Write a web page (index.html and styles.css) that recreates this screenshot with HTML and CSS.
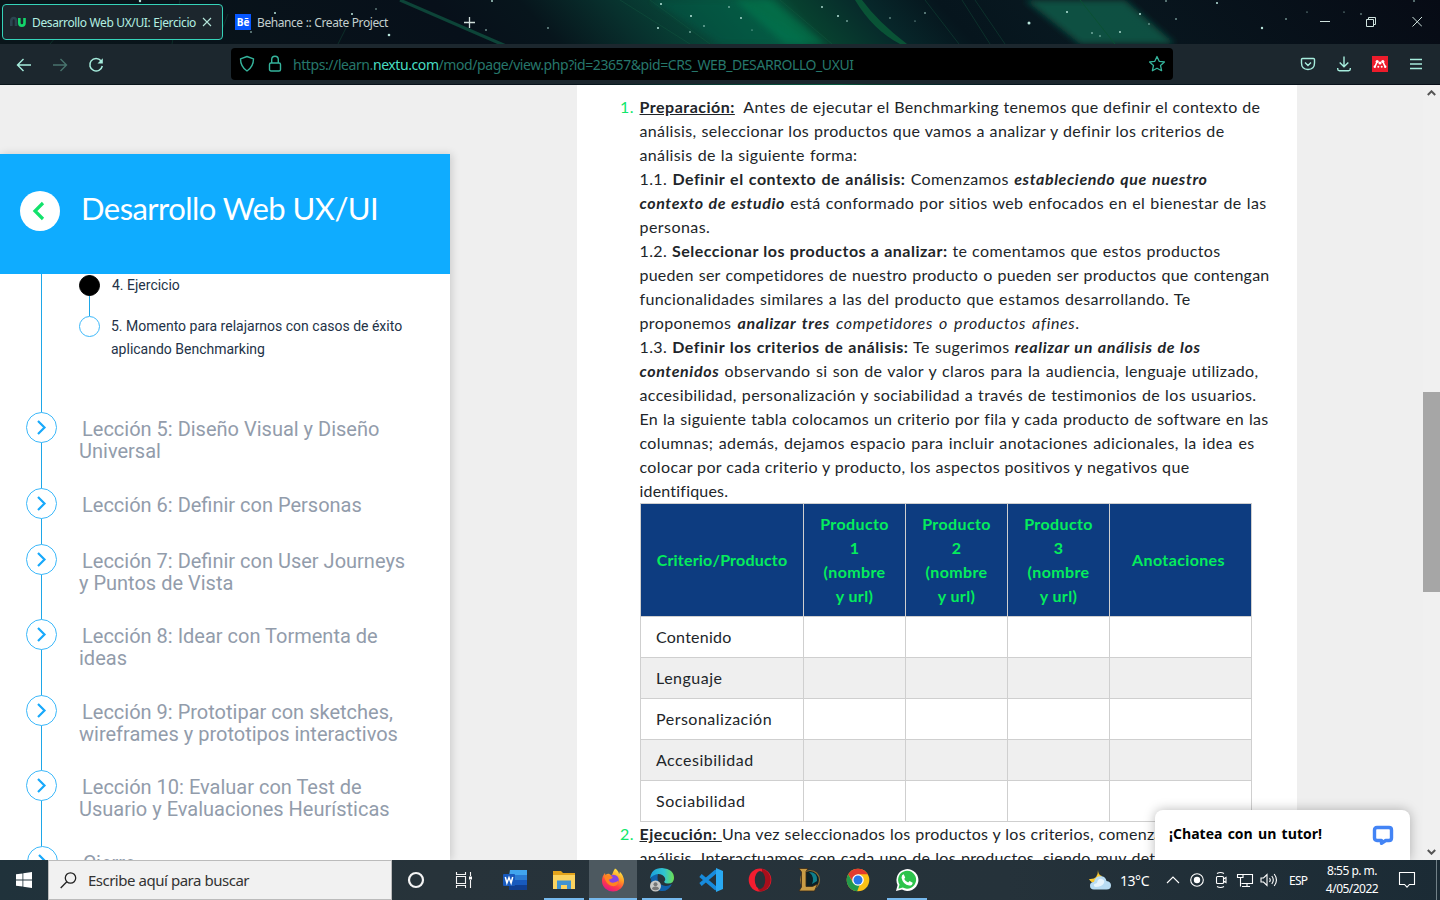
FILE: index.html
```html
<!DOCTYPE html>
<html lang="es">
<head>
<meta charset="utf-8">
<title>Desarrollo Web UX/UI: Ejercicio</title>
<link rel="stylesheet" href="styles.css">
</head>
<body>
<div class="screen">
  <header class="tabs">
    <svg class="sky" width="1440" height="85" viewBox="0 0 1440 85">
      <defs>
        <linearGradient id="neb" x1="0" x2="1440" y1="0" y2="0" gradientUnits="userSpaceOnUse">
          <stop offset="0" stop-color="#09151a"/><stop offset=".3" stop-color="#07101a"/><stop offset=".36" stop-color="#07151c"/><stop offset=".42" stop-color="#08302d"/><stop offset=".48" stop-color="#074a3a"/><stop offset=".53" stop-color="#065a40"/><stop offset=".55" stop-color="#07402f"/><stop offset=".6" stop-color="#07272a"/><stop offset=".65" stop-color="#06151d"/><stop offset=".73" stop-color="#081820"/><stop offset="1" stop-color="#070b15"/>
        </linearGradient>
        <filter id="soft" x="-10%" y="-20%" width="120%" height="140%"><feGaussianBlur stdDeviation="3"/></filter>
      </defs>
      <rect width="1440" height="85" fill="#070e17"/>
      <g transform="skewX(42)"><rect x="-100" width="1640" height="85" fill="url(#neb)"/></g>
      <g filter="url(#soft)">
        <path d="M650 0h90l70 44h-90z" fill="#06604a" opacity=".4"/>
        <path d="M735 0h38l52 44h-40z" fill="#078050" opacity=".5"/>
        <path d="M1025 0h100l50 44h-95z" fill="#0d5948" opacity=".85"/>
      </g>
      <path d="M855 0q18 30 45 44h7Q878 22 862 0z" fill="#0b6a3c" opacity=".65"/>
      <path d="M400 0l106 46" stroke="#0d4438" stroke-width="3" fill="none"/>
      <path d="M1080 0l35 44" stroke="#0b5134" fill="none"/>
      <path d="M780 0l52 44M962 0l28 44M975 0l30 44M228 14l-10 26M180 0l-8 44M70 20l-20 24M350 20l-12 24M620 0l70 44M650 0l60 44M925 0l34 44" stroke="#176046" stroke-width=".7" fill="none" opacity=".5"/>
      <g fill="#b9e6dc">
        <circle cx="140" cy="1" r="1.2"/><circle cx="275" cy="13" r="1"/><circle cx="352" cy="14" r="1"/><circle cx="389" cy="35" r="1.3"/><circle cx="376" cy="9" r=".7"/><circle cx="251" cy="32" r=".8"/><circle cx="492" cy="1" r=".9"/><circle cx="486" cy="30" r=".8"/><circle cx="548" cy="28" r=".8"/><circle cx="661" cy="4" r="1"/><circle cx="691" cy="16" r="1"/><circle cx="658" cy="28" r="1"/><circle cx="690" cy="32" r=".8"/><circle cx="704" cy="26" r=".8"/><circle cx="741" cy="18" r=".9"/><circle cx="729" cy="7" r=".8"/><circle cx="752" cy="30" r=".6"/><circle cx="822" cy="7" r=".9"/><circle cx="838" cy="16" r="1"/><circle cx="847" cy="21" r=".8"/><circle cx="890" cy="18" r=".7"/><circle cx="925" cy="13" r=".8"/><circle cx="915" cy="21" r=".6"/><circle cx="1029" cy="23" r="1.5"/><circle cx="1067" cy="12" r="1"/><circle cx="1140" cy="14" r="1"/><circle cx="1120" cy="32" r=".9"/><circle cx="1092" cy="33" r=".8"/><circle cx="1100" cy="36" r=".7"/><circle cx="1149" cy="24" r=".7"/><circle cx="1166" cy="1" r=".8"/><circle cx="1176" cy="19" r=".8"/><circle cx="1217" cy="3" r="1"/><circle cx="1262" cy="28" r="1.2"/><circle cx="1286" cy="19" r=".8"/><circle cx="1307" cy="12" r=".6"/><circle cx="1344" cy="12" r=".6"/><circle cx="1361" cy="14" r=".7"/><circle cx="1414" cy="1" r=".8"/>
      </g>
    </svg>
    <div class="tab tab-active">
      <svg width="16" height="16" viewBox="0 0 16 16" fill="none" stroke-width="2.6"><path d="M1.3 12V7q0-3 2.4-3T6 7v5" stroke="#2c4450"/><path d="M9.3 4v5q0 2.600 2.600 2.600T14.500 9V4" stroke="#14d66b"/></svg>
      <span class="fit tab-title">Desarrollo Web UX/UI: Ejercicio</span>
      <svg width="10" height="10" viewBox="0 0 10 10" stroke="#b4e6da" stroke-width="1.100"><path d="M1 1l8 8M9 1L1 9"/></svg>
    </div>
    <div class="tab tab-other">
      <span class="be">Bē</span>
      <span class="fit tab-title2">Behance :: Create Project</span>
    </div>
    <svg class="plus" width="13" height="13" viewBox="0 0 13 13" stroke="#d0ddda" stroke-width="1.300"><path d="M6.500 1v11M1 6.500h11"/></svg>
    <svg class="wins" width="102" height="12" viewBox="0 0 102 12" fill="none" stroke="#cfe3de"><path d="M0 5.500h10M46.500 3.500h7v7h-7zM48.500 3.500v-2h7v7h-2M92.500 1l9.500 9.500M102 1l-9.500 9.500"/></svg>
  </header>

  <nav class="toolbar">
    <div class="nav-buttons">
      <svg width="16" height="16" viewBox="0 0 16 16" fill="none" stroke="#a6eddd" stroke-width="1.400"><path d="M15 8H1.500M7.500 2l-6 6 6 6"/></svg>
      <svg width="16" height="16" viewBox="0 0 16 16" fill="none" stroke="#48736d" stroke-width="1.400"><path d="M1 8h13.500M8.500 2l6 6-6 6"/></svg>
      <svg width="16" height="16" viewBox="0 0 16 16" fill="none" stroke="#a6eddd" stroke-width="1.500"><path d="M13 3.700A6.300 6.300 0 1 0 14.300 9"/><path d="M14.800 1.200v5.300H9.500z" fill="#a6eddd" stroke="none"/></svg>
    </div>
    <div class="urlbar">
      <svg width="16" height="18" viewBox="0 0 16 18" fill="none" stroke="#35b49c" stroke-width="1.400"><path d="M8 1.500l6.500 2.300c0 5.500-1.500 9-6.500 12.200C3 12.800 1.500 9.300 1.500 3.800z" stroke-linejoin="round"/></svg>
      <svg width="14" height="18" viewBox="0 0 14 18" fill="none" stroke="#35b49c" stroke-width="1.400"><rect x="1.500" y="8" width="11" height="8" rx="1.500"/><path d="M3.700 8V4.500a3.300 3.300 0 0 1 6.600 0V8"/></svg>
      <span class="url">https://learn.<b>nextu.com</b>/mod/page/view.php?id=23657&amp;pid=CRS_WEB_DESARROLLO_UXUI</span>
      <svg class="star" width="18" height="18" viewBox="0 0 18 18" fill="none" stroke="#35b49c" stroke-width="1.300" stroke-linejoin="round"><path d="M9 1.500l2.200 4.800 5.200.6-3.900 3.500 1.100 5.300L9 13.200l-4.600 2.500 1.100-5.300L1.600 6.900l5.200-.6z"/></svg>
    </div>
    <div class="tools">
      <svg width="16" height="16" viewBox="0 0 16 16" fill="none" stroke="#a6eddd" stroke-width="1.400"><path d="M2.500 2.500h11q1 0 1 1V7q0 6.500-6.500 6.500T1.500 7V3.500q0-1 1-1zM5 6.500l3 3 3-3"/></svg>
      <svg width="16" height="16" viewBox="0 0 16 16" fill="none" stroke="#a6eddd" stroke-width="1.400"><path d="M8 .5v10M3.700 6.500L8 10.800l4.300-4.300M1.700 12v1q0 1.700 1.700 1.700h9.200q1.700 0 1.700-1.700v-1"/></svg>
      <svg width="16" height="16" viewBox="0 0 16 16"><path fill="#ec1c2b" d="M0 0h16v16H0z"/><g fill="#fff"><circle cx="5.200" cy="5.500" r="1.600"/><circle cx="10.800" cy="5.500" r="1.600"/><circle cx="2.800" cy="10.700" r="1.200"/><circle cx="13.200" cy="10.700" r="1.200"/><circle cx="8" cy="7" r="1.600"/><circle cx="6.300" cy="10.800" r="1"/><circle cx="9.700" cy="10.800" r="1"/></g><path d="M3 10.500l2-4.500M13 10.500L11 6" stroke="#fff" stroke-width="1.600"/></svg>
      <svg width="16" height="16" viewBox="0 0 16 16" stroke="#a6eddd" stroke-width="1.300"><path d="M2 3.500h12M2 8h12M2 12.500h12"/></svg>
    </div>
  </nav>

  <main class="page">
    <aside class="sidebar">
      <div class="course">
        <span class="back"><svg width="14" height="20" viewBox="0 0 14 20" fill="none" stroke="#12e26b" stroke-width="3.200"><path d="M11 2L3 10l8 8"/></svg></span>
        <h1>Desarrollo Web UX/UI</h1>
      </div>
      <div class="outline">
        <ul class="steps">
          <li class="step step-now"><i class="dot dot-on"></i><span class="ej">4. Ejercicio</span></li>
          <li class="step"><i class="dot"></i><span>5. Momento para relajarnos con casos de éxito<br>aplicando Benchmarking</span></li>
        </ul>
        <ul class="lessons">
          <li class="tall"><i class="go"><svg width="11" height="17" viewBox="0 0 11 17"><path d="M2 2l6.500 6.500L2 15"/></svg></i><span>Lección 5: Diseño Visual y Diseño<br>Universal</span></li>
          <li class="short"><i class="go"><svg width="11" height="17" viewBox="0 0 11 17"><path d="M2 2l6.500 6.500L2 15"/></svg></i><span>Lección 6: Definir con Personas</span></li>
          <li><i class="go"><svg width="11" height="17" viewBox="0 0 11 17"><path d="M2 2l6.500 6.500L2 15"/></svg></i><span>Lección 7: Definir con User Journeys<br>y Puntos de Vista</span></li>
          <li class="tall"><i class="go"><svg width="11" height="17" viewBox="0 0 11 17"><path d="M2 2l6.500 6.500L2 15"/></svg></i><span>Lección 8: Idear con Tormenta de<br>ideas</span></li>
          <li><i class="go"><svg width="11" height="17" viewBox="0 0 11 17"><path d="M2 2l6.500 6.500L2 15"/></svg></i><span>Lección 9: Prototipar con sketches,<br>wireframes y prototipos interactivos</span></li>
          <li class="tall"><i class="go"><svg width="11" height="17" viewBox="0 0 11 17"><path d="M2 2l6.500 6.500L2 15"/></svg></i><span>Lección 10: Evaluar con Test de<br>Usuario y Evaluaciones Heurísticas</span></li>
          <li class="last"><i class="go"><svg width="11" height="17" viewBox="0 0 11 17"><path d="M2 2l6.500 6.500L2 15"/></svg></i><span>Cierre</span></li>
        </ul>
      </div>
    </aside>

    <article class="article">
      <section class="item">
        <span class="num">1.</span>
        <div class="body">
          <p class="fit w1"><b><u>Preparación:</u></b>&nbsp; Antes de ejecutar el Benchmarking tenemos que definir el contexto de</p>
          <p class="fit w2">análisis, seleccionar los productos que vamos a analizar y definir los criterios de</p>
          <p class="fit w3">análisis de la siguiente forma:</p>
          <p class="fit w4">1.1. <b>Definir el contexto de análisis:</b> Comenzamos <b><em>estableciendo que nuestro</em></b></p>
          <p class="fit w5"><b><em>contexto de estudio</em></b> está conformado por sitios web enfocados en el bienestar de las</p>
          <p class="fit w6">personas.</p>
          <p class="fit w7">1.2. <b>Seleccionar los productos a analizar:</b> te comentamos que estos productos</p>
          <p class="fit w8">pueden ser competidores de nuestro producto o pueden ser productos que contengan</p>
          <p class="fit w9">funcionalidades similares a las del producto que estamos desarrollando. Te</p>
          <p class="fit w10">proponemos <em><b>analizar tres</b> competidores o productos afines</em>.</p>
          <p class="fit w11">1.3. <b>Definir los criterios de análisis:</b> Te sugerimos <b><em>realizar un análisis de los</em></b></p>
          <p class="fit w12"><b><em>contenidos</em></b> observando si son de valor y claros para la audiencia, lenguaje utilizado,</p>
          <p class="fit w13">accesibilidad, personalización y sociabilidad a través de testimonios de los usuarios.</p>
          <p class="fit w14">En la siguiente tabla colocamos un criterio por fila y cada producto de software en las</p>
          <p class="fit w15">columnas; además, dejamos espacio para incluir anotaciones adicionales, la idea es</p>
          <p class="fit w16">colocar por cada criterio y producto, los aspectos positivos y negativos que</p>
          <p class="fit w17">identifiques.</p>
          <table class="criteria">
            <colgroup><col class="c1"><col class="c2"><col class="c2"><col class="c2"><col class="c3"></colgroup>
            <thead><tr><th class="first">Criterio/Producto</th><th>Producto<br>1<br>(nombre<br>y url)</th><th>Producto<br>2<br>(nombre<br>y url)</th><th>Producto<br>3<br>(nombre<br>y url)</th><th class="notes">Anotaciones</th></tr></thead>
            <tbody>
              <tr><td>Contenido</td><td></td><td></td><td></td><td></td></tr>
              <tr><td class="loose">Lenguaje</td><td></td><td></td><td></td><td></td></tr>
              <tr><td class="loose">Personalización</td><td></td><td></td><td></td><td></td></tr>
              <tr><td class="loose">Accesibilidad</td><td></td><td></td><td></td><td></td></tr>
              <tr><td class="loose">Sociabilidad</td><td></td><td></td><td></td><td></td></tr>
            </tbody>
          </table>
        </div>
      </section>
      <section class="item">
        <span class="num">2.</span>
        <div class="body">
          <p class="fit w18"><b><u>Ejecución: </u></b>Una vez seleccionados los productos y los criterios, comenzamos</p>
          <p class="fit w19">análisis. Interactuamos con cada uno de los productos, siendo muy detallados</p>
        </div>
      </section>
    </article>

    <div class="scrollbar">
      <svg width="9" height="6" viewBox="0 0 9 6"><path d="M.8 5l3.700-3.700L8.200 5"/></svg>
      <i class="thumb"></i>
      <svg width="9" height="6" viewBox="0 0 9 6"><path d="M.8 1l3.700 3.700L8.200 1"/></svg>
    </div>

    <div class="chat">
      <span class="fit">¡Chatea con un tutor!</span>
      <svg width="22" height="22" viewBox="0 0 22 22" fill="none" stroke="#4384f5" stroke-width="3.400" stroke-linejoin="round"><path d="M5 2.500h12q2.500 0 2.500 2.500v8q0 2.500-2.500 2.500h-3.300L9.500 18.300v-2.800H5Q2.500 15.500 2.500 13V5Q2.500 2.500 5 2.500z"/></svg>
    </div>
  </main>

  <footer class="taskbar">
    <span class="start"><svg width="16" height="16" viewBox="0 0 16 16" fill="#fff"><path d="M0 2.300l6.500-.9v6.200H0zM7.300 1.300L16 0v7.600H7.300zM0 8.400h6.500v6.200L0 13.700zM7.300 8.400H16V16l-8.700-1.200z"/></svg></span>
    <div class="search">
      <svg width="17" height="17" viewBox="0 0 17 17" fill="none" stroke="#222" stroke-width="1.300"><circle cx="10.500" cy="6" r="5.200"/><path d="M6.800 9.700L.7 16"/></svg>
      <span class="fit">Escribe aquí para buscar</span>
    </div>
    <span class="cell48"><svg width="18" height="18" viewBox="0 0 18 18" fill="none" stroke="#f4f4f4" stroke-width="2.200"><circle cx="9" cy="9" r="7"/></svg></span>
    <span class="cell48"><svg width="18" height="16" viewBox="0 0 18 16" fill="none" stroke="#f4f4f4" stroke-width="1.100"><path d="M1.500 0v2.500h9V0M1.500 16v-2.500h9V16M1.500 4.500h9v7h-9zM15.500 0v4M15.500 8v8"/><path d="M14 4.500h3v3h-3z" fill="#fff" stroke="none"/></svg></span>
    <div class="apps">
      <span class="app"><svg width="24" height="24" viewBox="0 0 24 24"><path fill="#41a5ee" d="M7 2h17v6H6z"/><path fill="#2b7cd3" d="M6 7h18v5H6z"/><path fill="#185abd" d="M6 12h18v5H6z"/><path fill="#103f91" d="M6 17h18v5H6z"/><rect y="6" width="12" height="12" rx="1" fill="#185abd"/><path d="M2.300 9l1.600 6L6 9.500 8.100 15 9.700 9" fill="none" stroke="#fff" stroke-width="1.500"/></svg></span>
      <span class="app open"><svg width="22" height="20" viewBox="0 0 22 20"><path fill="#e3a31b" d="M0 1h8l2 2h12v4H0z"/><path fill="#fbd35f" d="M0 5h22v14H0z"/><path fill="#3f93d3" d="M4 10.500h14V19h-4v-4H8v4H4z"/></svg></span>
      <span class="app active"><svg width="24" height="24" viewBox="0 0 24 24"><defs><linearGradient id="fx" x1=".8" y1="0" x2=".3" y2="1"><stop offset="0" stop-color="#fff44f"/><stop offset=".4" stop-color="#ff9a22"/><stop offset=".7" stop-color="#ff3d48"/><stop offset="1" stop-color="#e31587"/></linearGradient></defs><path fill="url(#fx)" d="M14 .5q3.500 2 4 5.500 1-1 .7-2.500Q23 8 23 13a11 10.500 0 0 1-22 0q0-5 3-8l.4 2Q6 5.500 8 5.700 9 7 11 7q1.500-4.500 3-6.500z"/><circle cx="12.500" cy="12" r="5.300" fill="#8445e5"/><path fill="#ff8420" d="M3 8q4-2 9 1-1 2-4 2.500 1 4 5 3 3-.5 4.500-2Q17 19 11 18 5 17 3 8z"/></svg></span>
      <span class="app open"><svg width="24" height="24" viewBox="0 0 24 24"><defs><linearGradient id="ed"><stop offset="0" stop-color="#1a9fde"/><stop offset=".6" stop-color="#31c5cf"/><stop offset="1" stop-color="#6ee04f"/></linearGradient></defs><path fill="#1062ad" d="M1 11q0-5 7-5-2 7 3 10.500 5 3 11-.5-4 8-11 7Q1 22 1 11z"/><path fill="url(#ed)" d="M0 11Q1 0 12 0q12 1 12 10 0 5.500-6 5.500-3 0-4-1.500 2-2 1-4-2-4-7-4-6 1-8 5z"/><circle cx="5.500" cy="18" r="5.500" fill="#c9cac8"/><circle cx="5.500" cy="16.300" r="2" fill="#777"/><path fill="#777" d="M2 21q0-2.500 3.500-2.500T9 21q-3.500 2.500-7 0z"/></svg></span>
      <span class="app"><svg width="24" height="24" viewBox="0 0 24 24"><path d="M1.500 7.500L17.500 21M1.500 16.500L17.500 3" stroke="#178bdc" stroke-width="3.600"/><path fill="#29a9f2" d="M17 0l7 3v18l-7 3z"/></svg></span>
      <span class="app"><svg width="24" height="24" viewBox="0 0 24 24"><ellipse cx="12" cy="12" rx="11.300" ry="11.500" fill="#f21d2f"/><path fill="#a70e1b" d="M14 .8a11.300 11.500 0 0 1 0 22.400q-4 0-4-3l4-16z"/><ellipse cx="12" cy="12" rx="5.200" ry="9" fill="#253239"/></svg></span>
      <span class="app"><svg width="24" height="24" viewBox="0 0 24 24"><circle cx="13" cy="12" r="9.500" fill="#0c2026" stroke="#8c6b32" stroke-width="1.200"/><path fill="#107f8b" d="M12 4q9 0 8 9l-5 3q3-7-3-12z"/><path fill="#c99c45" stroke="#3b2916" stroke-width=".8" d="M2 .5h9l-2 3v15h6.500l5-2.500-3 7H2l2.500-4v-15z"/></svg></span>
      <span class="app"><svg width="24" height="24" viewBox="0 0 24 24"><circle cx="12" cy="12" r="11.300" fill="#fbc116"/><path fill="#e33b2e" d="M2.200 6.300A11.300 11.300 0 0 1 21.800 6.300H12L7 14z"/><path fill="#23994b" d="M2.200 6.300L7 14.800 13.500 17l-2.300 6.300A11.300 11.300 0 0 1 2.200 6.300z"/><circle cx="12" cy="12" r="5.800" fill="#fff"/><circle cx="12" cy="12" r="4.500" fill="#2876e8"/></svg></span>
      <span class="app open"><svg width="24" height="24" viewBox="0 0 24 24"><path fill="#fff" d="M1 23l1.600-6A11 11 0 1 1 7 21.600z"/><path fill="#2dc34b" d="M3.400 20.700l1.100-4.200a9 9 0 1 1 3.300 3.100z"/><path fill="#fff" d="M8.700 6.300l1.500 3.200-1 1.400q1.500 2.800 4 3.700l1.300-1.500 3.200 1.600q-.3 3-3.500 2.900Q8 16.500 6.500 9.700q.2-3 2.200-3.400z"/></svg></span>
    </div>
    <div class="tray">
      <svg class="weather" width="24" height="22" viewBox="0 0 24 22"><path fill="#f9c72d" d="M10 1q0 5 4 6l-2 6q-8 3-11-3 9 1 9-9z"/><path fill="#b8dcf3" d="M6 20.500q-4 0-4-3.800t4-3.700Q7 7 13 7.300q4.500.2 5.500 4.700 4.500.5 4.500 4.500t-4.500 4z"/><path fill="#e7f4fc" d="M7 18q-3-3 2-4 1-5 5-4 3 1 2 4-2 4-9 4z"/></svg>
      <span class="temp">13°C</span>
      <svg width="24" height="20" viewBox="0 0 24 20"><path d="M6 13l6-6 6 6"/></svg>
      <svg width="24" height="20" viewBox="0 0 24 20"><circle cx="12" cy="10" r="6.300"/><circle cx="12" cy="10" r="3.200" fill="#fff" stroke="none"/></svg>
      <svg width="24" height="20" viewBox="0 0 24 20"><path d="M8.500 6.500h5q1 0 1 1v5q0 1-1 1h-5q-1 0-1-1v-5q0-1 1-1zM14.500 9l2.500-1.500v5L14.500 11M8 3.500q3.500-2 7 0M8 16.500q3.500 2 7 0"/></svg>
      <svg width="24" height="20" viewBox="0 0 24 20"><path d="M8 4.500h11.500v9H8.500M14 13.500v3M9 16.500h8M4.500 4.500H10v3H4.500zM7.500 7.500v9M4.500 4.500v3"/></svg>
      <svg width="24" height="20" viewBox="0 0 24 20"><path d="M4 8v4h2.500l3.500 3.500v-11L6.500 8zM12.500 8q1.500 2 0 4M14.800 6q3 4 0 8M17.200 4q4.500 6 0 12"/></svg>
      <span class="lang">ESP</span>
      <div class="clock"><span>8:55 p. m.</span><span>4/05/2022</span></div>
      <svg class="note" width="18" height="18" viewBox="0 0 18 18"><path d="M1.500 1.500h15v12h-5l-2.500 2.700-2.500-2.700h-5z"/></svg>
      <i class="peek"></i>
    </div>
  </footer>
</div>
</body>
</html>
```
FILE: styles.css
```css
* { box-sizing: border-box; }
body { margin: 0; }
p, h1, ul { margin: 0; padding: 0; }
ul { list-style: none; }
svg { display: block; flex: none; }

.screen { width: 1440px; height: 900px; display: flex; flex-direction: column; overflow: hidden; font-family: "Noto Sans", "Open Sans", sans-serif; }
.fit { display: block; white-space: nowrap; text-align: justify; text-align-last: justify; }

/* Browser tabs */
.tabs { position: relative; height: 44px; flex: none; display: flex; align-items: center; padding-left: 2px; background: #070e17; }
.sky { position: absolute; left: 0; top: 0; height: 85px; }
.tab { position: relative; height: 36px; display: flex; align-items: center; font-size: 12px; }
.tab-active { width: 221px; border: 1px solid #35d3b9; border-radius: 4px; background: #1c262d; color: #b3f0e2; padding: 0 10px 0 7px; }
.tab-title { width: 164px; margin-left: 6px; letter-spacing: -0.38px; }
.tab-active svg:last-child { margin-left: 6px; }
.tab-other { width: 240px; padding-left: 12px; color: #c3cfce; }
.be { width: 16px; height: 16px; background: #0757ff; color: #fff; font: bold 10px/16px "Open Sans", sans-serif; text-align: center; }
.tab-title2 { width: 131px; margin-left: 6px; letter-spacing: -0.42px; }
.plus { position: relative; }
.wins { position: relative; margin-left: auto; margin-right: 18px; }

/* Toolbar */
.toolbar { position: relative; height: 40px; flex: none; display: flex; align-items: center; background: #1c272e; }
.nav-buttons { display: flex; gap: 20px; width: 231px; padding: 1px 0 0 16px; }
.urlbar { width: 942px; height: 32px; display: flex; align-items: center; gap: 13px; padding: 0 7px 0 8px; background: #000; border-radius: 4px; }
.url { font-size: 14px; color: #26776b; letter-spacing: -0.42px; white-space: nowrap; padding-top: 1px; margin-left: -2px; }
.url b { font-weight: 400; color: #48dcc2; }
.star { margin-left: auto; }
.tools { display: flex; gap: 20px; margin-left: auto; padding-right: 16px; }

/* Page */
.page { position: relative; flex: 1; min-height: 0; margin-top: 1px; display: flex; align-items: flex-start; background: #efefef; overflow: hidden; }
.sidebar { width: 450px; height: 706px; margin-top: 69px; flex: none; background: #fff; box-shadow: 2px 0 8px rgba(0, 0, 0, .15); }
.course { height: 120px; display: flex; align-items: center; background: #0facff; padding: 0 0 6px 20px; }
.back { width: 40px; height: 40px; border-radius: 50%; background: #fff; display: flex; align-items: center; justify-content: center; padding-right: 3px; }
.course h1 { margin-left: 21px; font: 400 31px/40px Lato, sans-serif; color: #fff; letter-spacing: -0.55px; padding-bottom: 6px; }
.outline { height: 586px; overflow: hidden; font-family: Roboto, sans-serif; background: linear-gradient(#1ea7e8, #1ea7e8) 41px 0 / 1px 100% no-repeat; }
.steps { height: 138px; padding: 1px 0 0 79px; }
.step { display: flex; gap: 11px; font-size: 14px; line-height: 23px; color: #233247; }
.step-now { height: 41px; background: linear-gradient(#1ea7e8, #1ea7e8) 10px 0 / 1px 100% no-repeat; }
.step span { margin-top: -1px; white-space: nowrap; }
.step .ej { padding-left: 1px; }
.dot { width: 21px; height: 21px; flex: none; border: 1px solid #3cb8fa; border-radius: 50%; background: #fff; }
.dot-on { background: #000; border-color: #000; }
.lessons li { height: 75px; display: flex; padding-left: 26px; font-size: 20px; line-height: 22px; color: #929cab; }
.lessons .tall { height: 76px; }
.lessons .short { height: 56px; }
.lessons .last { padding-left: 27px; }
.lessons span { margin: 6px 0 0 22px; text-indent: 3px; white-space: nowrap; }
.go { width: 31px; height: 31px; flex: none; border: 1px solid #3cb8fa; border-radius: 50%; background: #fff; display: flex; align-items: center; justify-content: center; }
.go svg path { fill: none; stroke: #18a9fb; stroke-width: 2.2; }

.article { width: 720px; height: 100%; margin-left: 127px; flex: none; background: #fff; padding: 10px 0 0 44px; font: 16px/24px Lato, sans-serif; letter-spacing: .37px; color: #212529; }
.item { display: flex; }
.num { width: 19px; margin-left: -1px; margin-right: 1px; flex: none; color: #10e66b; }
.body { margin-left: -.5px; }
.body p { height: 24px; }
.body p b { letter-spacing: .5px; }
.body p em, .body p em b { letter-spacing: .62px; }
.w1 { width: 619px; }
.w2 { width: 585px; }
.w3 { width: 218px; }
.w4 { width: 568px; }
.w5 { width: 627px; }
.w6 { width: 71px; letter-spacing: .45px; }
.w7 { width: 581px; }
.w8 { width: 630px; letter-spacing: .24px; }
.w9 { width: 551px; }
.w10 { width: 440px; }
.w11 { width: 561px; }
.w12 { width: 619px; }
.w13 { width: 617px; }
.w14 { width: 629px; letter-spacing: .3px; }
.w15 { width: 615px; }
.w16 { width: 550px; }
.w17 { width: 88px; letter-spacing: .2px; }
.w18 { width: 553px; letter-spacing: .25px; }
.w19 { width: 566px; letter-spacing: .25px; }

.criteria { width: 612px; margin-left: .5px; table-layout: fixed; border-collapse: collapse; }
.c1 { width: 163px; }
.c2 { width: 102px; }
.c3 { width: 142px; }
.criteria th, .criteria td { border: 1px solid #cfcfcf; padding: 8px 0; }
.criteria th { height: 113px; background: #0d3c80; color: #05ed5c; font-weight: 700; text-align: center; vertical-align: middle; }
.criteria .first { letter-spacing: .2px; }
.criteria .notes { padding-right: 4px; }
.criteria td { height: 41px; padding-left: 15px; letter-spacing: .25px; }
.criteria .loose { letter-spacing: .5px; }
.criteria tbody tr:nth-child(even) { background: #efefef; }

.scrollbar { width: 17px; height: 100%; margin-left: auto; display: flex; flex-direction: column; align-items: center; padding: 5px 0; background: #f0f0f0; }
.scrollbar path { fill: none; stroke: #555; stroke-width: 2; }
.thumb { width: 17px; height: 200px; margin: 296px 0 auto; background: #a6a6a6; }
.chat { position: absolute; right: 30px; bottom: 0; width: 255px; height: 50px; display: flex; align-items: center; justify-content: space-between; padding: 0 16px 2px 14px; border-radius: 8px 8px 0 0; background: #fff; box-shadow: 0 0 12px rgba(0, 0, 0, .28); font: 700 14px/20px "Open Sans", sans-serif; color: #000; }
.chat .fit { width: 153px; letter-spacing: 0; }
.chat svg { margin-top: 4px; }

/* Taskbar */
.taskbar { height: 40px; flex: none; display: flex; background: linear-gradient(90deg, #20323b, #27333a 30%, #25323a 70%, #1b2b35); color: #fff; }
.taskbar > span { display: flex; align-items: center; justify-content: center; width: 48px; }
.search { width: 344px; border: 1px solid #bbb; background: #f1f1f1; display: flex; align-items: center; padding-left: 11px; color: #333; font-size: 15px; }
.search .fit { width: 161px; margin-left: 11px; letter-spacing: -0.52px; }
.apps { display: flex; margin-left: 2px; }
.app { width: 49px; display: flex; align-items: center; justify-content: center; }
.open { background: linear-gradient(#76b9ed, #76b9ed) 5px 38px / 40px 2px no-repeat; }
.active { background: linear-gradient(#76b9ed, #76b9ed) 1px 38px / 48px 2px no-repeat, linear-gradient(#4d5960, #4d5960) 1px 0 / 48px 40px no-repeat; }
.tray { margin-left: auto; display: flex; align-items: center; height: 40px; }
.tray svg { fill: none; stroke: #fff; stroke-width: 1.1; }
.tray .weather { stroke: none; }
.temp { width: 41px; margin-left: 8px; font-size: 14px; letter-spacing: -0.45px; }
.lang { width: 36px; padding-left: 8px; font-size: 12px; letter-spacing: -0.7px; }
.clock { width: 70px; display: flex; flex-direction: column; align-items: center; font-size: 12px; line-height: 18px; letter-spacing: -0.52px; }
.tray .note { margin-left: 11px; }
.peek { width: 1px; height: 40px; margin: 0 3px 0 20px; background: #718087; }
```
